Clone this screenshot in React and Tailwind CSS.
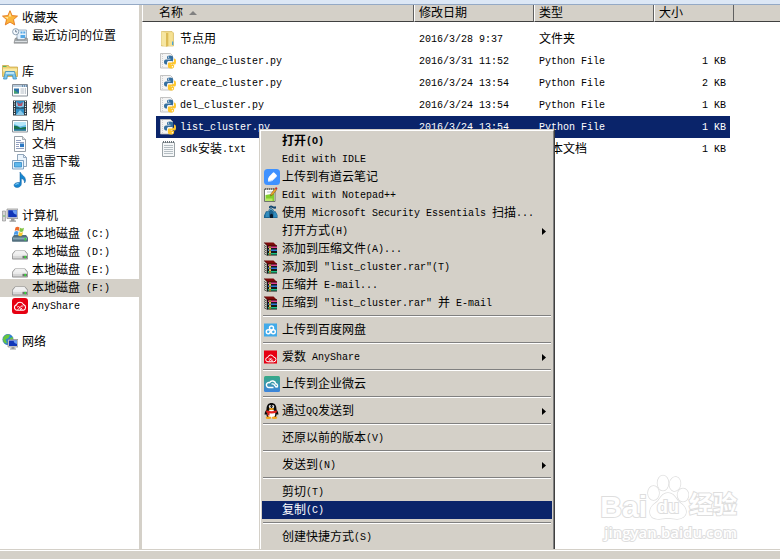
import React, { useState } from 'react';
import clsx from 'clsx';

// 12px full-width characters next to 6px wide latin ones
function Label({ text }) {
    return (
        <span className="whitespace-pre">
            {text.split(/([\x20-\x7e]+)/).filter(Boolean).map((part, i) => (
                /^[\x20-\x7e]/.test(part)
                    ? <span key={i} className="text-[10px]">{part}</span>
                    : <span key={i} className="align-[-1px]">{part}</span>
            ))}
        </span>
    );
}

function Svg({ children }) {
    return (
        <svg className="w-4 h-4 shrink-0" viewBox="0 0 16 16" aria-hidden="true">{children}</svg>
    );
}

const CLOUD = 'M5 12.2a2.7 2.7 0 0 1-.5-5.3 3.7 3.7 0 0 1 7-.3 2.9 2.9 0 0 1-.2 5.6z';

const Drive = () => (
    <Svg>
        <path d="M3 6.5h10l3 3.5v4.500a1 1 0 0 1-1 1H1a1 1 0 0 1-1-1V10z" fill="#8f8f8f" />
        <path d="M3.400 7h9.200l2.400 3H1z" fill="#f1f1f1" />
        <path d="M.8 10.300h14.400v4.200H.8z" fill="#d6d6d6" />
        <path d="M.8 10.300h14.400v1.200H.8z" fill="#fff" />
        <path d="M10.500 11.800h4.500v2.500h-4.500z" fill="#6f6f6f" />
        <path d="M12.500 11.900h1.600v2.300h-1.600z" fill="#36e036" />
    </Svg>
);

const WinRar = () => (
    <Svg>
        <path d="M0 2.500 3.500 5v9.500L0 12.500l1.200-1L0 9.500l1.200-1L0 6.500l1.200-1z" fill="#e6e6da" />
        <path d="m0 4.500 3.500 2M0 6.500l3.500 2M0 8.500l3.500 2M0 10.500l3.500 2M0 12.500l3.500 2" fill="none" stroke="#222" strokeWidth=".8" />
        <path d="M3 4.500h10v10H3z" fill="#161616" />
        <path d="M0 1.500h9.500L13 5H3.500z" fill="#7d0a0a" />
        <path d="M0 1.500 3.500 5H13" fill="none" stroke="#2c0404" strokeWidth=".8" />
        <path d="M4 5.500h9V7H4z" fill="#e0408f" />
        <path d="M4 8.500h9V10H4z" fill="#2a78d8" />
        <path d="M4 12h9v1.500H4z" fill="#19c283" />
        <path d="M5 5h2v9.500H5z" fill="#8e7a2e" />
        <path d="M5 7.200h2v1.200H5zm0 3.300h2v1.300H5z" fill="#f1e27c" />
    </Svg>
);

const Monitor = () => (
    <>
        <path d="M5 1h11v9.5H5z" fill="#d9d9d9" stroke="#8a8a8a" strokeWidth=".7" />
        <path d="M6.2 2.2h8.6v7H6.2z" fill="#1236b8" />
        <path d="M10.5 2.2h4.3v4.5q-3.5-.5-4.3-4.5" fill="#6c9df2" />
        <path d="M9 10.5h3.5v2H14v1.3H7.5v-1.3H9z" fill="#9a9a9a" />
    </>
);

const icons = {
    star: (
        <Svg>
            <path d="m8 .7 2.1 4.9 5.4.5-4 3.5 1.2 5.3L8 12.1l-4.7 2.8 1.2-5.3-4-3.5 5.4-.5z" fill="#fbb63c" stroke="#e4761b" strokeWidth=".9" />
            <path d="m8 2.6 1.3 3.9H6.7zM2.4 7l3.9-.1L5.9 9z" fill="#ffe79b" />
        </Svg>
    ),
    recent: (
        <Svg>
            <path d="M5 2h9.5v10H5z" fill="#e5f0fa" stroke="#7f98b1" strokeWidth=".7" />
            <path d="M8.5 3.5h2v2h-2zm2.8 0h2v2h-2zM8.5 7h4.7v3H8.5z" fill="#54a8e6" />
            <path d="m3 10.5 2-.8v2h8v-2l2.500.8v4.700H2z" fill="#a3a9ad" stroke="#777" strokeWidth=".5" />
            <path d="M3 13h12v1H3z" fill="#dbdfe2" />
            <circle cx="3.7" cy="3.7" r="3.1" fill="#f5faff" stroke="#8297aa" strokeWidth=".9" />
            <path d="M3.7 1.8v2.1h1.5" fill="none" stroke="#4a6178" strokeWidth=".8" />
        </Svg>
    ),
    library: (
        <Svg>
            <path d="M.5 1.5h6l1 1.5h8v9.5H.5z" fill="#eed06e" stroke="#c6a040" strokeWidth=".7" />
            <path d="M1 4.5h14v3H1z" fill="#f9e9a4" />
            <path d="M1 2h3.5v1H1z" fill="#58b860" />
            <path d="M3.5 7.5h9l2 7.5h-3.3l-.7-3.7h-5L4.8 15H1.5z" fill="#7cc5ec" stroke="#3a8dbd" strokeWidth=".8" />
            <path d="M4 8.3h8l.4 1.4H3.6z" fill="#cdeefb" />
        </Svg>
    ),
    subversion: (
        <Svg>
            <path d="M.5 2.5h15v11.5H.5z" fill="#fff" stroke="#858d96" />
            <path d="M1 3h14v2H1z" fill="#b7cadb" />
            <path d="M10 3.4h1v1h-1zm2 0h1v1h-1zm2 0h1v1h-1z" fill="#235587" />
            <path d="M2 6.5h5v5H2z" fill="#2c71a8" />
            <path d="M2 11.5V8l5 3.5z" fill="#46a46c" />
            <path d="M8.5 7H12M8.5 9H12M8.5 11H12M13.3 6v6" stroke="#9faab5" strokeWidth=".8" />
        </Svg>
    ),
    video: (
        <Svg>
            <path d="M1 .5h14v15H1z" fill="#28343d" />
            <path d="M4 1h8v6.5H4zm0 7.5h8V15H4z" fill="#2f8ec6" />
            <path d="m4 2 4 3.5L12 1.5v5L8 7.5 4 6zm0 13 4-5 4 4v1z" fill="#8ac9e9" />
            <path d="m5 2 3 2 3-2-1 4H6z" fill="#b45168" />
            <path d="M2.5 1v14M13.5 1v14" stroke="#f2f6f8" strokeWidth="1.2" strokeDasharray="1.2 1.2" />
        </Svg>
    ),
    picture: (
        <Svg>
            <path d="M.5 2.5h15v11.5H.5z" fill="#fff" stroke="#8a9299" />
            <path d="M2 4h12v8.5H2z" fill="#65bce9" />
            <path d="M2 4h12v3L8 8.5 2 6z" fill="#b6e7f9" />
            <path d="M2 7.5q4 0 6.5 2.5 2-1 5.5-1v3.5H2z" fill="#18724d" />
            <path d="M2 11.2h12v1.3H2z" fill="#2871a7" />
        </Svg>
    ),
    document: (
        <Svg>
            <path d="M2.5.5h8l3 3v12h-11z" fill="#fff" stroke="#8b949d" strokeWidth=".9" />
            <path d="M10.5.5v3h3" fill="#ddd" stroke="#8b949d" strokeWidth=".7" />
            <path d="M4 4.5h5M4 6.5h8M4 8.5h3M4 10.5h3M4 12.5h8" stroke="#8694b8" strokeWidth=".9" />
            <path d="M8 7.5h4v3.6H8z" fill="#2d78c3" />
        </Svg>
    ),
    thunder: (
        <Svg>
            <path d="M5.5.5h6l3 3v9h-9z" fill="#edf5fc" stroke="#849bb2" strokeWidth=".9" />
            <path d="M11.5.5v3h3" fill="none" stroke="#849bb2" strokeWidth=".8" />
            <path d="M.5 6.5h11v8.5H.5z" fill="#e7f4fd" stroke="#7499bb" strokeWidth=".9" />
            <path d="M2.5 8.5h7V13h-7z" fill="#5eb8ec" stroke="#3388c5" strokeWidth=".8" />
        </Svg>
    ),
    music: (
        <Svg>
            <path d="M8 0c1 3 5.500 4 5.500 8 0 1.500-.5 2.500-1 3 .3-3-1.500-4-3.200-4.500v5.400c0 2-2 3.600-4.200 3.600-2 0-3.300-1.200-3-2.700.4-1.700 3.300-2.800 5.900-2.200z" fill="#1686d0" stroke="#0f5f9f" strokeWidth=".5" />
            <path d="M3.500 12.600q1.500-1.400 3.200-.8" stroke="#9edcff" fill="none" />
        </Svg>
    ),
    computer: (
        <Svg>
            <path d="M.5 3h3v10h-3z" fill="#d5d5d5" stroke="#888" strokeWidth=".6" />
            <path d="M1.5 7h1v2h-1z" fill="#5db35d" />
            <Monitor />
        </Svg>
    ),
    system: (
        <Svg>
            <path d="M2 9h12l2 2.500V15a.8.8 0 0 1-.8.8H.8A.8.8 0 0 1 0 15v-3.500z" fill="#53707f" />
            <path d="M1 11.500h14v2H1z" fill="#87a7b6" />
            <path d="M12.500 12h1.600v2.500h-1.600z" fill="#36e036" />
            <path d="M3.500 1.500q2-1.500 4 0L6.700 5q-2-1.300-4 0z" fill="#ef6a2a" />
            <path d="M8 1.800q2 1.200 4 0L11.200 5.300q-2 1.200-4 0z" fill="#83c343" />
            <path d="M2.500 5.700q2-1.500 4 0l-.8 3.600q-2-1.400-4 0z" fill="#4a9be8" />
            <path d="M7 6.100q2 1.200 4 0l-.8 3.500q-2 1.200-4 0z" fill="#fac832" />
        </Svg>
    ),
    drive: <Drive />,
    anyshare: (
        <Svg>
            <rect width="16" height="16" rx="3" fill="#e60012" />
            <path d={CLOUD} fill="none" stroke="#fff" strokeWidth="1.100" />
            <path d="M5.500 12 9 8.300q1.300-1 2.200.2M8 12l2-2.200M5 9.200q1.500-1.500 3 .3l2.500 2.500" fill="none" stroke="#fff" strokeWidth=".9" />
        </Svg>
    ),
    network: (
        <Svg>
            <circle cx="6" cy="5.500" r="5.200" fill="#2b86d8" stroke="#1b5da8" strokeWidth=".5" />
            <path d="M2 2.500Q5-.5 8 1L6.500 4 3.500 5.500 5 9l-1.500.5Q.8 7.500.9 5zM8 4l3-1v4H8z" fill="#69c73c" />
            <path d="M6 5.500h10v7.500H6z" fill="#ddd" stroke="#777" strokeWidth=".6" />
            <path d="M7 6.500h8v5.500H7z" fill="#1236b8" />
            <path d="M11.500 6.500H15v3.500q-3-.5-3.500-3.500" fill="#6c9df2" />
            <path d="M9.500 13h3v1.500H14v1H8v-1h1.500z" fill="#999" />
        </Svg>
    ),
    folder: (
        <Svg>
            <path d="M1.500.5h10.500l1.500 1.500v13h-12z" fill="#f0d883" stroke="#cfb04f" strokeWidth=".6" />
            <path d="M1.500.5 6 2v13.700L1.500 14z" fill="#f6e6a2" />
            <path d="M6 2h2.500v13L6 15.700z" fill="#dcbb55" />
            <path d="M8.500 1.500h4V15h-4z" fill="#f5e193" />
            <path d="M12 10.500h1.300V14H12z" fill="#4aa5d8" />
        </Svg>
    ),
    python: (
        <Svg>
            <path d="M.5.5h10l2 2v12.500H.5z" fill="#f4f4f4" stroke="#b5b5b5" strokeWidth=".8" />
            <path d="M2.500 1v14" stroke="#d0d0d0" strokeDasharray="1 1" />
            <path d="M10 2.500c-2.500 0-3 .7-3 2v1.300h3.500v.7H6c-1.500 0-2 1-2 2.500s.7 2.500 2 2.500h1v-1.700c0-1 .8-1.700 1.800-1.700H12c.8 0 1.200-.5 1.200-1.300V4.500c0-1.300-1-2-3.200-2" fill="#356f9f" />
            <path d="M14 5.500v2.300c0 1-.7 1.600-1.700 1.600H9.200c-.8 0-1.300.5-1.300 1.300v2.600c0 1.400 1 2.200 3 2.200 2.100 0 3.200-.8 3.200-2.100V12h-3.300v-.6h4c1 0 1.200-1.200 1.200-2.900s-.5-3-2-3" fill="#ffc72d" />
            <circle cx="8.500" cy="4.100" r=".7" fill="#fff" />
            <circle cx="12.400" cy="13.700" r=".7" fill="#fff" />
        </Svg>
    ),
    text: (
        <Svg>
            <path d="M2.500 1.500h12v14h-12z" fill="#f5f7f8" stroke="#8e979c" strokeWidth=".9" />
            <path d="M3 1h11.500" stroke="#687177" strokeWidth="2" strokeDasharray="1 1" />
            <path d="M4 4.500h9M4 6.500h9M4 8.500h9M4 10.500h9M4 12.500h9" stroke="#a5afb5" strokeWidth=".8" />
        </Svg>
    ),
    youdao: (
        <Svg>
            <rect width="16" height="16" rx="3.500" fill="#3e91ff" />
            <path d="M4 12.200q-.3-3.300 1.200-4.800L8.800 3.700q.8-.8 1.600 0l2.200 2.200q.7.8 0 1.600L9 11.100q-1.700 1.400-5 1.100" fill="#fff" />
            <path d="M4 12.200q3.300.3 5-1.100l3.600-3.600" fill="none" stroke="#bddaff" />
        </Svg>
    ),
    notepad: (
        <Svg>
            <path d="M.5 2h10.500v12.500H.5z" fill="#fff" stroke="#60675f" strokeWidth=".9" />
            <path d="M1 2h10" stroke="#555" strokeWidth="1.500" strokeDasharray="1 1" />
            <path d="M1.500 8l8.700-1.500V14H1.500z" fill="#82ce2d" />
            <path d="M1.500 11.500h7V14h-7z" fill="#b9e863" />
            <path d="M3 5h6" stroke="#9aa2aa" strokeWidth=".7" />
            <path d="m6.500 9 .6-2.400L11 1.500l1.700 1.200L8.500 8z" fill="#eda72b" stroke="#72491c" strokeWidth=".5" />
            <path d="m11 1.500 1-1.500 1.500 1.300-1 1.400z" fill="#cc252b" />
        </Svg>
    ),
    security: (
        <Svg>
            <path d="M0 10.500 2 6.200h2.500V5L7 2.800l3 2.500v1h1.500l2 3.700v3H0z" fill="#1c638f" />
            <path d="M5 3.500v-2Q7 0 8.500 1t3.500.2V3.500Q10 4 8.500 3T5 3.500" fill="#12456f" />
            <path d="m1.500 9 1.200-2H5v5H1.500zM9.500 7.200h2L13 10v2.200H9.500z" fill="#318bbd" />
            <path d="M6 13V9.800q1.500-2 3 0V13z" fill="#07192c" />
            <path d="m4.500 6 2.500-2 3 2.500" fill="none" stroke="#8dc1d7" strokeWidth=".7" />
        </Svg>
    ),
    winrar: <WinRar />,
    baidupan: (
        <Svg>
            <path d="M0 1.500h13v13H0z" fill="#41aae9" />
            <circle cx="4.300" cy="9.700" r="2" fill="none" stroke="#fff" strokeWidth="1.400" />
            <circle cx="9.300" cy="9.700" r="2" fill="none" stroke="#fff" strokeWidth="1.400" />
            <circle cx="7.500" cy="6" r="2" fill="none" stroke="#fff" strokeWidth="1.400" />
            <path d="m5.500 11 3-3" stroke="#fff" strokeWidth="1.200" />
        </Svg>
    ),
    anyshareSmall: (
        <Svg>
            <path d="M0 1.500h13v13H0z" fill="#e60012" />
            <path d="M4 12.800a2.200 2.200 0 0 1-.2-4.400 3 3 0 0 1 5.800-.3 2.300 2.300 0 0 1 0 4.700z" fill="none" stroke="#fff" />
            <path d="m5 12.500 2.500-3.300M7 12.500l1.800-2M4.500 10q1.500-1.300 4.500 2.500" fill="none" stroke="#fff" strokeWidth=".8" />
        </Svg>
    ),
    weiyun: (
        <Svg>
            <defs>
                <linearGradient id="wy" x1="0" y1="0" x2="0" y2="1">
                    <stop stopColor="#36aa83" />
                    <stop offset="1" stopColor="#3c83dd" />
                </linearGradient>
            </defs>
            <rect width="16" height="16" rx="1.500" fill="url(#wy)" />
            <path d="M9.500 11.500H5a2.500 2.500 0 1 1 .6-4.900 3.300 3.300 0 0 1 6.100 1.200 1.900 1.900 0 0 1 1 3.500M7.500 8.200q2-1 3.200 1.200l1.800 2.100" fill="none" stroke="#fff" strokeWidth="1.400" />
        </Svg>
    ),
    qq: (
        <Svg>
            <path d="M2.500 6.500C2.500 2 4.500 0 7.500 0s5 2 5 6.500c1.500 2 2 3.500 1.800 5.300l-1.600-.5L12 14H3l-.7-2.700-1.600.5c-.2-1.800.3-3.300 1.800-5.300" fill="#0b0b0b" />
            <ellipse cx="7.500" cy="10.800" rx="3.800" ry="4" fill="#fff" />
            <path d="M2.200 7.200q5.300 2 10.600 0v2.200q-5.300 2-10.600 0z" fill="#e3221d" />
            <path d="M3.500 9h2v3.500h-2z" fill="#e3221d" />
            <ellipse cx="6" cy="3.500" rx="1.100" ry="1.500" fill="#fff" />
            <ellipse cx="9" cy="3.500" rx="1.100" ry="1.500" fill="#fff" />
            <circle cx="6.300" cy="3.600" r=".5" />
            <circle cx="8.700" cy="3.600" r=".5" />
            <ellipse cx="7.500" cy="6" rx="2.700" ry=".9" fill="#f6a51b" />
            <ellipse cx="4.500" cy="14.700" rx="2.800" ry="1.200" fill="#f6a51b" />
            <ellipse cx="10.500" cy="14.700" rx="2.800" ry="1.200" fill="#f6a51b" />
        </Svg>
    ),
};

const tree = [
    { name: '收藏夹', icon: 'star', children: [{ name: '最近访问的位置', icon: 'recent' }] },
    {
        name: '库', icon: 'library', children: [
            { name: 'Subversion', icon: 'subversion' },
            { name: '视频', icon: 'video' },
            { name: '图片', icon: 'picture' },
            { name: '文档', icon: 'document' },
            { name: '迅雷下载', icon: 'thunder' },
            { name: '音乐', icon: 'music' },
        ],
    },
    {
        name: '计算机', icon: 'computer', children: [
            { name: '本地磁盘 (C:)', icon: 'system' },
            { name: '本地磁盘 (D:)', icon: 'drive' },
            { name: '本地磁盘 (E:)', icon: 'drive' },
            { name: '本地磁盘 (F:)', icon: 'drive', active: true },
            { name: 'AnyShare', icon: 'anyshare' },
        ],
    },
    { name: '网络', icon: 'network', children: [] },
];

const files = [
    { name: '节点用', icon: 'folder', date: '2016/3/28 9:37', type: '文件夹', size: '' },
    { name: 'change_cluster.py', icon: 'python', date: '2016/3/31 11:52', type: 'Python File', size: '1 KB' },
    { name: 'create_cluster.py', icon: 'python', date: '2016/3/24 13:54', type: 'Python File', size: '2 KB' },
    { name: 'del_cluster.py', icon: 'python', date: '2016/3/24 13:54', type: 'Python File', size: '1 KB' },
    { name: 'list_cluster.py', icon: 'python', date: '2016/3/24 13:54', type: 'Python File', size: '1 KB' },
    { name: 'sdk安装.txt', icon: 'text', date: '2016/3/24 13:54', type: '文本文档', size: '1 KB' },
];

// each group is closed by a separator
const menuGroups = [
    [
        { text: '打开(O)', bold: true },
        { text: 'Edit with IDLE' },
        { text: '上传到有道云笔记', icon: 'youdao' },
        { text: 'Edit with Notepad++', icon: 'notepad' },
        { text: '使用 Microsoft Security Essentials 扫描...', icon: 'security' },
        { text: '打开方式(H)', sub: true },
        { text: '添加到压缩文件(A)...', icon: 'winrar' },
        { text: '添加到 "list_cluster.rar"(T)', icon: 'winrar' },
        { text: '压缩并 E-mail...', icon: 'winrar' },
        { text: '压缩到 "list_cluster.rar" 并 E-mail', icon: 'winrar' },
    ],
    [{ text: '上传到百度网盘', icon: 'baidupan' }],
    [{ text: '爱数 AnyShare', icon: 'anyshareSmall', sub: true }],
    [{ text: '上传到企业微云', icon: 'weiyun' }],
    [{ text: '通过QQ发送到', icon: 'qq', sub: true }],
    [{ text: '还原以前的版本(V)' }],
    [{ text: '发送到(N)', sub: true }],
    [{ text: '剪切(T)' }, { text: '复制(C)' }],
    [{ text: '创建快捷方式(S)' }],
];

function Sidebar() {
    return (
        <nav className="w-[139px] shrink-0 pt-1 flex flex-col gap-[18px] bg-white">
            {tree.map(group => (
                <div key={group.name}>
                    <a href="#" className="flex items-center gap-1 h-[18px] pl-0.5">
                        {icons[group.icon]}
                        <Label text={group.name} />
                    </a>
                    {group.children.map(item => (
                        <a
                            key={item.name}
                            href="#"
                            className={clsx('flex items-center gap-1 h-[18px] pl-3', item.active && 'bg-[#d4d0c8]')}
                        >
                            {icons[item.icon]}
                            <Label text={item.name} />
                        </a>
                    ))}
                </div>
            ))}
        </nav>
    );
}

function HeaderCell({ text, sorted, className }) {
    return (
        <th className={clsx('p-0 font-normal border-l border-l-white border-r border-r-[#606060] border-b border-b-[#404040]', className)}>
            <button className="flex items-center gap-1.5 w-full h-4 pl-1 text-left">
                <Label text={text} />
                {sorted && (
                    <svg className="w-2 h-1" viewBox="0 0 8 4" aria-hidden="true"><path d="M4 0 8 4H0z" fill="#808080" /></svg>
                )}
            </button>
        </th>
    );
}

function FileTable({ selected, onSelect }) {
    return (
        <table className="w-full table-fixed border-separate border-spacing-0">
            <thead className="bg-[#d4d0c8]">
                <tr>
                    <HeaderCell text="名称" sorted className="w-[272px] pl-3" />
                    <HeaderCell text="修改日期" className="w-[120px]" />
                    <HeaderCell text="类型" className="w-[120px]" />
                    <HeaderCell text="大小" className="w-[80px]" />
                    <td className="border-b border-b-[#404040]"></td>
                </tr>
            </thead>
            <tbody className="before:block before:h-1.5 before:content-['']">
                {files.map(file => {
                    const cell = clsx('flex items-center h-[22px]', file.name === selected && 'bg-[#0a246a] text-white');
                    return (
                        <tr key={file.name} onClick={() => onSelect(file.name)}>
                            <td className="p-0 pl-3.5">
                                <div className={clsx(cell, 'pl-1 gap-1')}>
                                    {icons[file.icon]}
                                    <Label text={file.name} />
                                </div>
                            </td>
                            <td className="p-0"><div className={clsx(cell, 'pl-[5px]')}><Label text={file.date} /></div></td>
                            <td className="p-0"><div className={clsx(cell, 'pl-[5px]')}><Label text={file.type} /></div></td>
                            <td className="p-0 pr-1"><div className={clsx(cell, 'pr-1 justify-end')}><Label text={file.size} /></div></td>
                            <td></td>
                        </tr>
                    );
                })}
            </tbody>
        </table>
    );
}

function ContextMenu() {
    const [active, setActive] = useState('复制(C)');

    return (
        <div className="absolute left-[259px] top-[124px] w-[296px] bg-[#d4d0c8] border border-l-[#d4d0c8] border-t-[#d4d0c8] border-r-[#404040] border-b-[#404040]">
            <div className="p-px pb-2 border border-l-white border-t-white border-r-[#808080] border-b-[#808080]">
                {menuGroups.map((group, i) => (
                    <div key={i}>
                        {i > 0 && <hr className="mx-px mt-[3px] mb-1 h-0.5 border-t border-t-[#808080] border-b border-b-white" />}
                        {group.map(item => (
                            <button
                                key={item.text}
                                onMouseEnter={() => setActive(item.text)}
                                className={clsx(
                                    'flex items-center gap-0.5 w-full h-[18px] pl-0.5 pr-1.5 text-left',
                                    item.bold && 'font-bold',
                                    active === item.text && 'bg-[#0a246a] text-white'
                                )}
                            >
                                {item.icon ? icons[item.icon] : <span className="w-4 shrink-0" />}
                                <Label text={item.text} />
                                {item.sub && (
                                    <svg className="ml-auto w-1 h-[7px]" viewBox="0 0 4 7" aria-hidden="true"><path d="M0 0l4 3.500L0 7z" fill="currentColor" /></svg>
                                )}
                            </button>
                        ))}
                    </div>
                ))}
            </div>
        </div>
    );
}

function Watermark() {
    const outline = 'text-white [-webkit-text-stroke:2px_#dedede] [paint-order:stroke_fill]';
    return (
        <div className={clsx("absolute right-[43px] bottom-1.5 flex flex-col items-end pointer-events-none", outline)}>
            <div className="flex items-end font-bold">
                <span className="font-['Liberation_Sans'] text-3xl leading-7">Bai</span>
                <div className="relative w-[42px] h-12">
                    <svg className="w-full h-full" viewBox="0 0 42 48" fill="#fff" stroke="#dedede" strokeWidth="1.500" aria-hidden="true">
                        <ellipse cx="6.500" cy="20" rx="5.500" ry="7" />
                        <ellipse cx="16" cy="10" rx="5.500" ry="7.500" />
                        <ellipse cx="28" cy="11" rx="5.500" ry="7" transform="rotate(10 28 11)" />
                        <ellipse cx="36" cy="22" rx="5.500" ry="6.500" />
                        <path d="M21 20c-5 0-7 4-10 8-3 3-8 5-8 11 0 5 4 7 9 7 3 0 5-1 9-1s6 1 9 1c5 0 9-3 9-7 0-6-5-8-8-11-3-4-5-8-10-8z" />
                    </svg>
                    <span className="absolute inset-x-0 bottom-1 text-center font-['Liberation_Sans'] text-lg leading-5">du</span>
                </div>
                <span className="text-2xl leading-7">经验</span>
            </div>
            <span className="font-['Open_Sans'] font-semibold text-[15px] leading-[22px]">jingyan.baidu.com</span>
        </div>
    );
}

export default function App() {
    const [selected, setSelected] = useState('list_cluster.py');

    return (
        <div className="h-screen flex flex-col bg-white text-black text-xs font-['Liberation_Mono','Noto_Sans_CJK_SC',monospace] cursor-default">
            <div className="h-[5px] shrink-0 bg-[#dce7f5] border-b border-b-[#94a9c5]" />
            <div className="relative flex flex-1 min-h-0 overflow-hidden">
                <Sidebar />
                <div className="w-[3px] shrink-0 bg-[#d4d0c8]" />
                <main className="flex-1 min-w-0">
                    <FileTable selected={selected} onSelect={setSelected} />
                </main>
                <Watermark />
                <ContextMenu />
            </div>
            <footer className="h-2.5 shrink-0 border-t border-t-[#d4d0c8] bg-[#d4d0c8]">
                <div className="h-px bg-white" />
            </footer>
        </div>
    );
}
